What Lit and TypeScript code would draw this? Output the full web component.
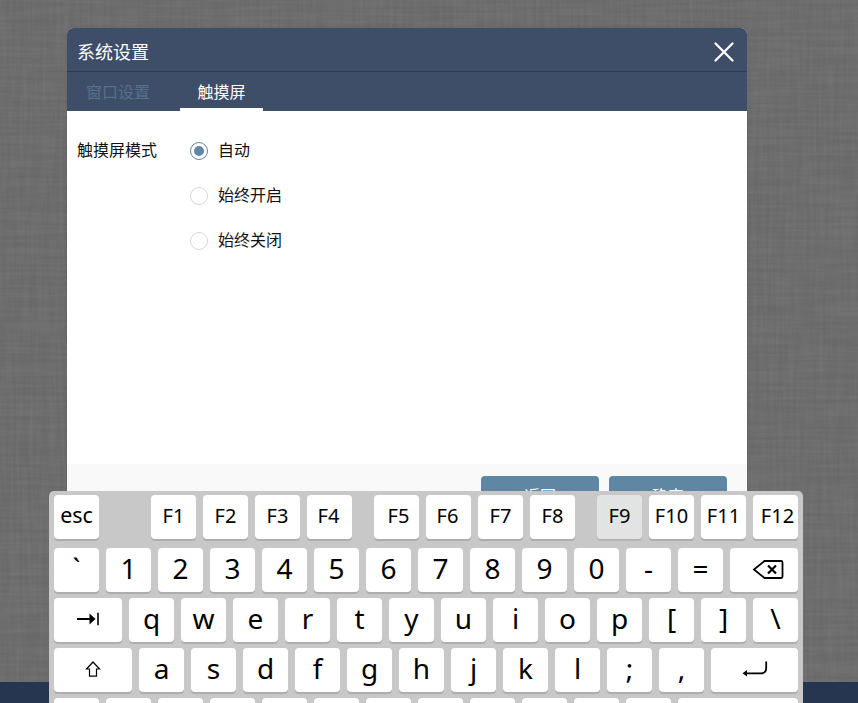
import { LitElement, html, css, svg, nothing } from "lit";
import { customElement, property, state } from "lit/decorators.js";
import { classMap } from "lit/directives/class-map.js";
import { styleMap } from "lit/directives/style-map.js";

interface Key {
  label?: string;
  icon?: "backspace" | "tab" | "shift" | "enter";
  width?: number;
  gap?: number;
  nudge?: number;
  active?: boolean;
}

const chars = (s: string): Key[] => [...s].map((label) => ({ label }));

const FUNCTION_ROW: Key[] = [
  { label: "esc" },
  { label: "F1", gap: 52 },
  { label: "F2" },
  { label: "F3" },
  { label: "F4", nudge: -1 },
  { label: "F5", gap: 22, nudge: 2 },
  { label: "F6", nudge: -1 },
  { label: "F7" },
  { label: "F8" },
  { label: "F9", gap: 22, active: true },
  { label: "F10" },
  { label: "F11" },
  { label: "F12", nudge: 2 },
];

const ROWS: Key[][] = [
  [...chars("`1234567890-="), { icon: "backspace", width: 68, nudge: 4 }],
  [{ icon: "tab", width: 68 }, ...chars("qwertyuiop[]\\")],
  [{ icon: "shift", width: 78 }, ...chars("asdfghjkl;,"), { icon: "enter", width: 87 }],
  [...Array.from({ length: 12 }, () => ({})), { width: 120 }],
];

const ICONS = {
  backspace: svg`<svg width="32" height="22" viewBox="0 0 32 22" fill="none" stroke="#000" stroke-width="1.8">
    <path d="M12.5 2H29Q30.5 2 30.5 3.5V17.5Q30.5 19 29 19H12.5L2 10.5Z"/>
    <path d="M16 6.5L24 14.5M24 6.5L16 14.5" stroke-width="2.2"/></svg>`,
  tab: svg`<svg width="24" height="16" viewBox="0 0 24 16">
    <path d="M1 7H15" stroke="#000" stroke-width="2"/><path d="M13.5 1.5L19.5 7L13.5 12.5Z"/>
    <path d="M22 .8V13.2" stroke="#000" stroke-width="1.6"/></svg>`,
  shift: svg`<svg width="16" height="18" viewBox="0 0 16 18" fill="none" stroke="#000" stroke-width="1.2">
    <path d="M8 1L14.5 8H11.5V15.2H4.5V8H1.5Z"/></svg>`,
  enter: svg`<svg width="26" height="18" viewBox="0 0 26 18" fill="none" stroke="#000" stroke-width="1.8">
    <path d="M24.2 .5V7Q24.2 12.3 19 12.3H3"/><path d="M.5 12.3L5 9V15.6Z" fill="#000" stroke="none"/></svg>`,
};

@customElement("soft-key")
class SoftKey extends LitElement {
  @property({ attribute: false }) key: Key = {};
  @property({ type: Boolean }) small = false;

  static styles = css`
    :host { display: block; flex: none; }
    .key {
      height: 44px; border-radius: 4px; background: #fff; box-shadow: 0 2px 0 #adadad;
      display: flex; align-items: center; justify-content: center;
      font-size: 28px; line-height: 44px; color: #000;
    }
    .active { background: #e2e4e4; box-shadow: 0 2px 0 #b4b4b4; }
    .fn { font-size: 20px; line-height: 40px; }
    .fn .face { margin-top: -3px; }
    .esc { font-size: 21.5px; }
    .esc .face { margin-top: -5px; }
    .face { display: block; flex: none; margin-top: -4px; white-space: pre; }
    .icon { margin-top: 0; }
    svg { display: block; }
  `;

  render() {
    const k = this.key;
    const cls = { key: true, fn: this.small, esc: k.label === "esc", active: !!k.active };
    return html`<div class=${classMap(cls)} style=${styleMap({ width: `${k.width ?? 45}px` })}>
      ${k.icon || k.label
        ? html`<span class=${classMap({ face: true, icon: !!k.icon })}
            style=${styleMap({ marginLeft: `${(k.nudge ?? 0) * 2}px` })}>${k.icon ? ICONS[k.icon] : k.label}</span>`
        : nothing}
    </div>`;
  }
}

@customElement("soft-keyboard")
class SoftKeyboard extends LitElement {
  static styles = css`
    :host {
      display: block; box-sizing: border-box; width: 754px; height: 262px; padding: 4px 5px 0;
      background: #c8c8c8; border-radius: 5px 5px 0 0;
      font-family: "Noto Sans", "Open Sans", sans-serif;
    }
    .row { display: flex; justify-content: space-between; height: 44px; margin-bottom: 6px; }
    .fnrow { justify-content: flex-start; margin-bottom: 9px; }
  `;

  render() {
    return html`
      <div class="row fnrow">
        ${FUNCTION_ROW.map((k, i) => html`<soft-key small .key=${k}
          style=${styleMap({ marginLeft: `${i ? k.gap ?? 7 : 0}px` })}></soft-key>`)}
      </div>
      ${ROWS.map((r) => html`<div class="row">${r.map((k) => html`<soft-key .key=${k}></soft-key>`)}</div>`)}
    `;
  }
}

@customElement("settings-dialog")
class SettingsDialog extends LitElement {
  @state() mode = "自动";

  static styles = css`
    :host {
      display: flex; flex-direction: column; width: 680px; height: 486px; background: #fff;
      border-radius: 6px 6px 0 0; overflow: hidden; color: #111; font-size: 16px;
      box-shadow: 0 0 4px rgba(0, 0, 0, 0.1);
    }
    .head {
      box-sizing: border-box; height: 44px; padding: 0 13px 0 10px; display: flex; align-items: center;
      justify-content: space-between; background: #3f4e68; border-bottom: 1px solid #2b3a55;
      color: #fff; font-size: 18px;
    }
    .head svg { margin-top: 4px; }
    .title { padding-top: 2px; line-height: 24px; }
    .tabs { height: 39px; background: #3f4e68; display: flex; flex: none; }
    .tab {
      box-sizing: border-box; height: 39px; line-height: 36px; padding-top: 1px; color: #54718d; margin-left: 19px;
    }
    .on { width: 83px; margin-left: 30px; text-align: center; color: #fff; border-bottom: 3px solid #fff; }
    .body { flex: 1; display: flex; padding: 17px 10px 0; }
    .name { width: 113px; line-height: 42px; }
    .option { display: flex; align-items: center; height: 45px; gap: 10px; line-height: 43px; }
    .option span:last-child { height: 45px; }
    .dot {
      box-sizing: border-box; width: 18px; height: 18px; border: 1px solid #d8d8d8; border-radius: 50%;
      display: flex; align-items: center; justify-content: center;
    }
    .picked { border-color: #5f86a3; }
    .picked::after { content: ""; width: 10px; height: 10px; border-radius: 50%; background: #5f86a3; }
    .foot {
      box-sizing: border-box; height: 50px; background: #f9f9f9; padding: 12px 20px 0;
      display: flex; justify-content: flex-end; gap: 10px;
    }
    .btn {
      width: 118px; height: 38px; line-height: 38px; border-radius: 4px; background: #5f86a3;
      color: #fff; text-align: center;
    }
  `;

  render() {
    return html`
      <div class="head">
        <span class="title">系统设置</span>
        <svg width="20" height="20" viewBox="0 0 20 20">
          <path d="M1.5 1.5L18.5 18.5M18.5 1.5L1.5 18.5" stroke="#fff" stroke-width="2.2" stroke-linecap="round" />
        </svg>
      </div>
      <div class="tabs"><div class="tab">窗口设置</div><div class="tab on">触摸屏</div></div>
      <div class="body">
        <div class="name">触摸屏模式</div>
        <div>
          ${["自动", "始终开启", "始终关闭"].map((m) => html`
            <div class="option" @click=${() => (this.mode = m)}>
              <span class=${classMap({ dot: true, picked: m === this.mode })}></span><span>${m}</span>
            </div>`)}
        </div>
      </div>
      <div class="foot"><div class="btn">返回</div><div class="btn">确定</div></div>
    `;
  }
}

@customElement("app-root")
class AppRoot extends LitElement {
  static styles = css`
    :host {
      display: block; position: relative; width: 858px; height: 703px; overflow: hidden; background: #6e6e6e;
      font-family: "Noto Sans CJK SC", "Liberation Sans", sans-serif;
    }
    .desk { display: flex; flex-direction: column; height: 703px; }
    .fabric { flex: 1; min-height: 0; display: block; width: 858px; }
    .taskbar { height: 21px; background: #273650; }
    settings-dialog { position: absolute; left: 67px; top: 28px; }
    soft-keyboard { position: absolute; left: 49px; top: 491px; }
  `;

  render() {
    return html`
      <div class="desk">
        <svg class="fabric">
          <filter id="weft" x="0" y="0" width="100%" height="100%">
            <feTurbulence type="fractalNoise" baseFrequency="0.015 0.3" numOctaves="2" seed="3" />
            <feColorMatrix values="0 0 0 0 0  0 0 0 0 0  0 0 0 0 0  0.22 0 0 0 -0.07" />
          </filter>
          <filter id="warp" x="0" y="0" width="100%" height="100%">
            <feTurbulence type="fractalNoise" baseFrequency="0.3 0.015" numOctaves="2" seed="8" />
            <feColorMatrix values="0 0 0 0 1  0 0 0 0 1  0 0 0 0 1  0.1 0 0 0 -0.03" />
          </filter>
          <rect width="858" height="682" filter="url(#weft)" opacity="0.5" />
          <rect width="858" height="682" filter="url(#warp)" opacity="0.7" />
        </svg>
        <div class="taskbar"></div>
      </div>
      <settings-dialog></settings-dialog>
      <soft-keyboard></soft-keyboard>
    `;
  }
}
